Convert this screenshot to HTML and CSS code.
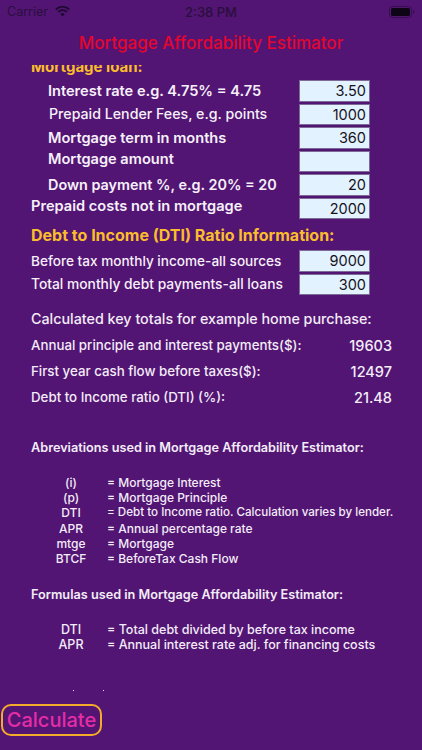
FILE: index.html
```html
<!DOCTYPE html>
<html lang="en">
<head>
<meta charset="utf-8">
<title>Mortgage Affordability Estimator</title>
<link rel="stylesheet" href="styles.css">
</head>
<body>
<div class="screen">
  <header class="status">
    <div class="status-left">
      <span>Carrier</span>
      <svg class="wifi" viewBox="0 0 16 12" width="15" height="11"><path d="M8 11.500 5.600 8.900a3.400 3.400 0 0 1 4.800 0zM3.900 7.200 2.500 5.700a7.800 7.800 0 0 1 11 0l-1.400 1.500a5.800 5.800 0 0 0-8.200 0zM1.300 4.500 0 3.100a11.400 11.400 0 0 1 16 0l-1.300 1.400a9.500 9.500 0 0 0-13.400 0z"/></svg>
    </div>
    <span class="clock">2:38 PM</span>
    <svg class="battery" viewBox="0 0 26 12" width="26" height="12"><rect x=".5" y=".5" width="22" height="11" rx="3" fill="none" stroke="currentColor" stroke-opacity=".4"/><rect x="2" y="2" width="19" height="8" rx="1.600"/><path d="M24 4v4c.8-.3 1.400-1.100 1.400-2s-.6-1.700-1.400-2z" opacity=".4"/></svg>
  </header>
  <h1 class="title">Mortgage Affordability Estimator</h1>
  <main class="scroller">
    <h2 class="heading clipped">Mortgage loan:</h2>
    <div class="form">
      <div class="row"><label class="label indent">Interest rate e.g. 4.75% = 4.75</label><div class="field">3.50</div></div>
      <div class="row"><label class="label indent drop fees">Prepaid Lender Fees, e.g. points</label><div class="field">1000</div></div>
      <div class="row"><label class="label indent">Mortgage term in months</label><div class="field">360</div></div>
      <div class="row"><label class="label indent lift">Mortgage amount</label><div class="field"></div></div>
      <div class="row"><label class="label indent down">Down payment %, e.g. 20% = 20</label><div class="field">20</div></div>
      <div class="row"><label class="label lift">Prepaid costs not in mortgage</label><div class="field">2000</div></div>
    </div>
    <h2 class="heading dti">Debt to Income (DTI) Ratio Information:</h2>
    <div class="form">
      <div class="row"><label class="label small">Before tax monthly income-all sources</label><div class="field">9000</div></div>
      <div class="row"><label class="label small wide">Total monthly debt payments-all loans</label><div class="field">300</div></div>
    </div>
    <h3 class="totals-title">Calculated key totals for example home purchase:</h3>
    <div class="totals">
      <div class="total"><span>Annual principle and interest payments($):</span><b>19603</b></div>
      <div class="total"><span>First year cash flow before taxes($):</span><b>12497</b></div>
      <div class="total"><span>Debt to Income ratio (DTI) (%):</span><b>21.48</b></div>
    </div>
    <h4 class="note-title abbr-title">Abreviations used in Mortgage Affordability Estimator:</h4>
    <dl class="notes abbr">
      <dt>(i)</dt><dd>= Mortgage Interest</dd>
      <dt>(p)</dt><dd>= Mortgage Principle</dd>
      <dt>DTI</dt><dd class="tight">= Debt to Income ratio. Calculation varies by lender.</dd>
      <dt>APR</dt><dd>= Annual percentage rate</dd>
      <dt>mtge</dt><dd>= Mortgage</dd>
      <dt>BTCF</dt><dd>= BeforeTax Cash Flow</dd>
    </dl>
    <h4 class="note-title formula-title">Formulas used in Mortgage Affordability Estimator:</h4>
    <dl class="notes formulas">
      <dt>DTI</dt><dd>= Total debt divided by before tax income</dd>
      <dt>APR</dt><dd>= Annual interest rate adj. for financing costs</dd>
    </dl>
    <div class="specks"><i></i><i></i></div>
  </main>
  <footer class="footer"><button class="calc" type="button">Calculate</button></footer>
</div>
</body>
</html>
```
FILE: styles.css
```css
* { box-sizing: border-box; }
html, body { margin: 0; padding: 0; }
body { background: #521573; font-family: Inter, "Liberation Sans", sans-serif; color: #f4ecf8; }
.screen { width: 422px; height: 750px; display: flex; flex-direction: column; overflow: hidden; background: #521573; }

.status { height: 22px; padding: 1px 7px 0; display: grid; grid-template-columns: 1fr auto 1fr; align-items: center; color: #2a0f3e; font-size: 12.500px; }
.status-left { display: flex; align-items: center; gap: 7px; }
.wifi { fill: #1f0a30; }
.clock { font-weight: 500; font-size: 13px; }
.battery { justify-self: end; fill: #0d0516; color: #0d0516; }

.title { margin: 8px 0 0; height: 26px; line-height: 26px; text-align: center; font-size: 17px; font-weight: 500; color: #e5062d; }

.scroller { flex: 1; min-height: 0; overflow: hidden; padding-left: 31px; padding-right: 30px; margin-top: 9px; }
.heading { margin: 0; font-size: 15.500px; font-weight: 700; color: #fbbd2c; white-space: nowrap; }
.heading.clipped { font-size: 15px; line-height: 20px; margin-top: -8px; margin-bottom: 3px; height: 20px; }

.form { display: flex; flex-direction: column; gap: 2px; }
.row { height: 21.500px; display: flex; align-items: center; justify-content: space-between; padding-right: 22px; }
.label { font-size: 14.600px; font-weight: 600; white-space: nowrap; color: #f7f0fa; }
.label.small { font-size: 13.600px; font-weight: 500; }
.label.wide { font-size: 13.800px; }
.indent { padding-left: 17px; }
.label.down { font-size: 14.400px; }
.fees { font-size: 14.200px; font-weight: 500; padding-left: 18px; }
.drop { margin-top: -2px; }
.lift { margin-bottom: 4px; }
.field { width: 71px; height: 21.500px; padding: 0 3px; border: 1px solid #7d6a96; background: #e3f2ff; color: #16121c; font-size: 14.500px; line-height: 19.500px; text-align: right; flex: none; }

.heading.dti { margin-top: 6px; margin-bottom: 4px; line-height: 20px; height: 21px; font-size: 16px; }

.totals-title { margin: 15px 0 0; font-size: 14.300px; line-height: 18px; font-weight: 500; white-space: nowrap; }
.totals { display: flex; flex-direction: column; gap: 8px; margin-top: 8px; }
.total { height: 18px; display: flex; align-items: center; justify-content: space-between; font-size: 13.300px; font-weight: 500; }
.total b { font-size: 14.500px; font-weight: 500; }

.note-title { margin: 0; font-size: 12.700px; line-height: 14px; font-weight: 600; white-space: nowrap; }
.abbr-title { margin-top: 35px; }
.formula-title { margin-top: 22px; }
.notes { margin: 0; display: grid; grid-template-columns: 76px 1fr; font-size: 12px; line-height: 15.200px; font-weight: 500; white-space: nowrap; }
.notes dt { text-align: center; padding-left: 4px; }
.notes dd { margin: 0; }
.notes dd.tight { font-size: 11.600px; }
.abbr { margin-top: 20px; }
.formulas { margin-top: 20px; font-size: 12.500px; }

.specks { margin-top: 37px; padding-left: 42px; display: flex; gap: 29px; }
.specks i { width: 1px; height: 1px; background: #e8dcef; display: block; }

.footer { height: 46px; padding: 0 0 0 1px; }
.calc { display: block; width: 101px; height: 32px; margin: 0; padding: 0; border: 2px solid #f5ab2a; border-radius: 10px; background: transparent; color: #e52da6; font-family: inherit; font-size: 20px; font-weight: 500; line-height: 28px; }
```
